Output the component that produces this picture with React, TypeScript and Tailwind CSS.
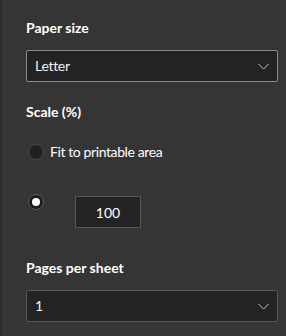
import React from "react";

function Chevron() {
  return (
    <svg width="11" height="7" viewBox="0 0 11 7" fill="none" className="block">
      <path d="M0.5 1 L5.5 6 L10.5 1" stroke="#c4c4c4" strokeWidth="1" />
    </svg>
  );
}

function Select({ value, border }: { value: string; border: string }) {
  return (
    <div
      className={`h-[32px] w-[252px] rounded-[2px] border ${border} bg-[#232323] flex items-center justify-between pl-[8px] pr-[8px]`}
    >
      <span className="text-[14px] tracking-[-0.3px] text-[#f2f2f2] leading-none">{value}</span>
      <Chevron />
    </div>
  );
}

export default function App() {
  return (
    <div
      className="w-[286px] h-[336px] bg-[#353535] flex overflow-hidden"
      style={{ fontFamily: 'Lato, "Noto Sans", sans-serif' }}
    >
      <div className="w-[2px] h-full bg-[#2c2c2c]" />
      <div className="flex flex-col pl-[24px] pt-[18px]">
        <div className="h-[20px] text-[14px] font-bold text-white leading-[20px]">Paper size</div>
        <div className="mt-[12px]">
          <Select value="Letter" border="border-[#8a8a8a]" />
        </div>
        <div className="mt-[20px] h-[20px] text-[14px] font-bold text-white leading-[20px]">Scale (%)</div>
        <div className="mt-[20px] h-[20px] flex items-center">
          <div className="ml-[2px] w-[16px] h-[16px] rounded-full bg-[#202020] border border-[#4a4a4a]" />
          <span className="ml-[6px] text-[14px] tracking-[-0.4px] text-white leading-[20px]">Fit to printable area</span>
        </div>
        <div className="mt-[32px] flex items-start">
          <div className="ml-[2px] w-[16px] h-[16px] rounded-full bg-[#1c1c1c] border border-[#5a5a5a] flex items-center justify-center">
            <div className="w-[8px] h-[8px] rounded-full bg-white" />
          </div>
          <div className="ml-[31px] mt-[2px] w-[66px] h-[32px] border border-[#5a5a5a] bg-[#232323] flex items-center justify-center text-[14px] text-white">
            100
          </div>
        </div>
        <div className="mt-[30px] h-[20px] text-[14px] font-bold text-white leading-[20px]">Pages per sheet</div>
        <div className="mt-[12px]">
          <Select value="1" border="border-[#5a5a5a]" />
        </div>
      </div>
    </div>
  );
}
